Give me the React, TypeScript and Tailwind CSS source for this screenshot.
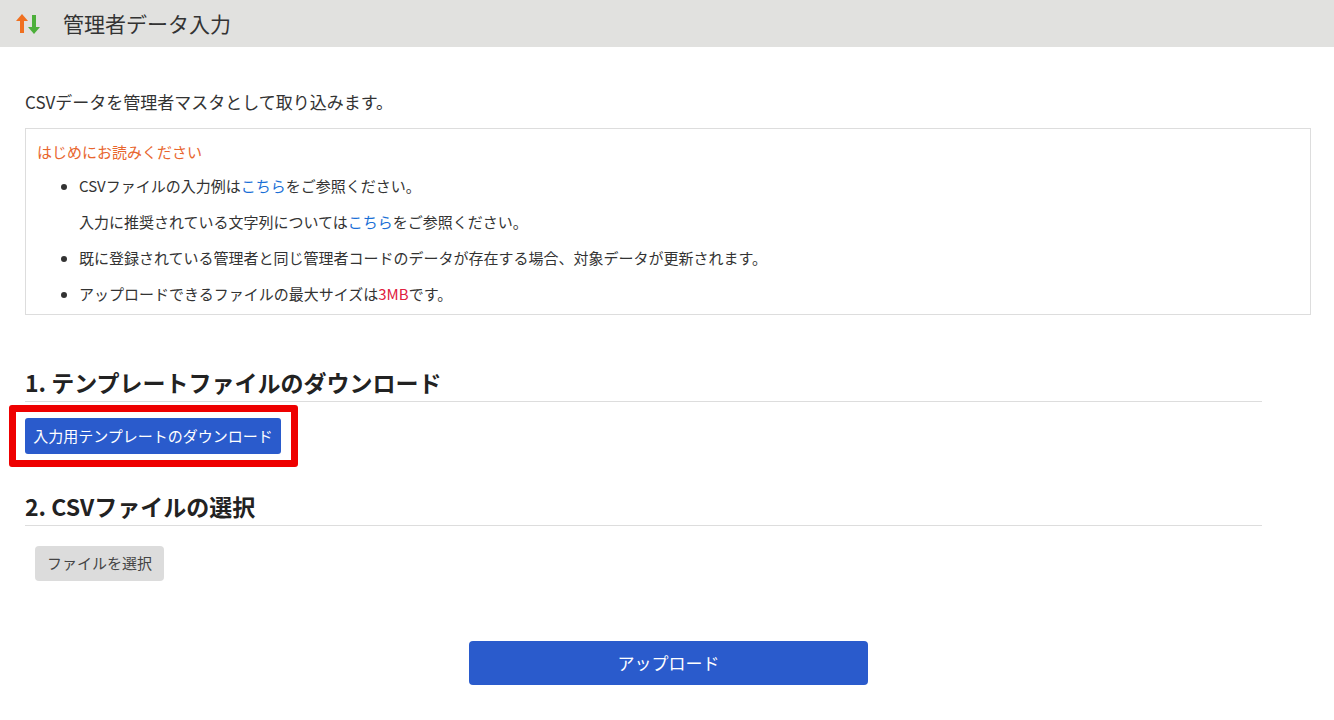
export default function App() {
  const f = { fontFamily: '"Noto Sans CJK JP", "Noto Sans", sans-serif' };
  return (
    <div className="w-[1334px] h-[720px] bg-white text-[#333]" style={f}>
      <div className="h-[47px] bg-[#e1e1df] flex items-center pl-[15px]">
        <svg width="26" height="24" viewBox="0 0 26 24">
          <path d="M7 21V7" stroke="#f07020" strokeWidth="4" />
          <path d="M1 9l6-7 6 7z" fill="#f07020" />
          <path d="M19 3v14" stroke="#4caf3a" strokeWidth="4" />
          <path d="M13 15l6 7 6-7z" fill="#4caf3a" />
        </svg>
        <span className="ml-[22px] text-[21px] text-[#333]">管理者データ入力</span>
      </div>
      <div className="pl-[25px] pr-[23px]">
        <div className="mt-[41px] text-[17px] leading-[28px]">CSVデータを管理者マスタとして取り込みます。</div>
        <div className="mt-[12px] border border-[#ddd] h-[187px] px-[11px] pt-[11px] text-[15px]">
          <div className="text-[#e8662e] leading-[24px]">はじめにお読みください</div>
          <ul className="mt-[4px] pl-[42px] list-disc leading-[36px]">
            <li>CSVファイルの入力例は<span className="text-[#1a6fd6]">こちら</span>をご参照ください。<br />入力に推奨されている文字列については<span className="text-[#1a6fd6]">こちら</span>をご参照ください。</li>
            <li>既に登録されている管理者と同じ管理者コードのデータが存在する場合、対象データが更新されます。</li>
            <li>アップロードできるファイルの最大サイズは<span className="text-[#e02040]">3MB</span>です。</li>
          </ul>
        </div>
        <div className="w-[1237px]">
          <h2 className="mt-[50px] text-[23px] font-bold leading-[34px] pb-[2px] border-b border-[#ddd] text-[#222]">1. テンプレートファイルのダウンロード</h2>
          <div className="ml-[-16px] mt-[3px] w-[289px] h-[62px] border-[7px] border-[#ee0000] rounded-[3px] flex items-start pl-[9px] pt-[6px]">
            <button className="w-[256px] h-[36px] bg-[#2a5bcc] text-white text-[15px] rounded-[3px]">入力用テンプレートのダウンロード</button>
          </div>
          <h2 className="mt-[22px] text-[23px] font-bold leading-[34px] pb-[2px] border-b border-[#ddd] text-[#222]">2. CSVファイルの選択</h2>
          <button className="ml-[10px] mt-[20px] w-[129px] h-[35px] bg-[#dcdcdc] text-[15px] text-[#444] rounded-[4px]">ファイルを選択</button>
        </div>
        <div className="flex justify-center w-[1287px] mt-[60px]">
          <button className="w-[399px] h-[44px] bg-[#2a5bcc] text-white text-[17px] rounded-[4px]">アップロード</button>
        </div>
      </div>
    </div>
  );
}
